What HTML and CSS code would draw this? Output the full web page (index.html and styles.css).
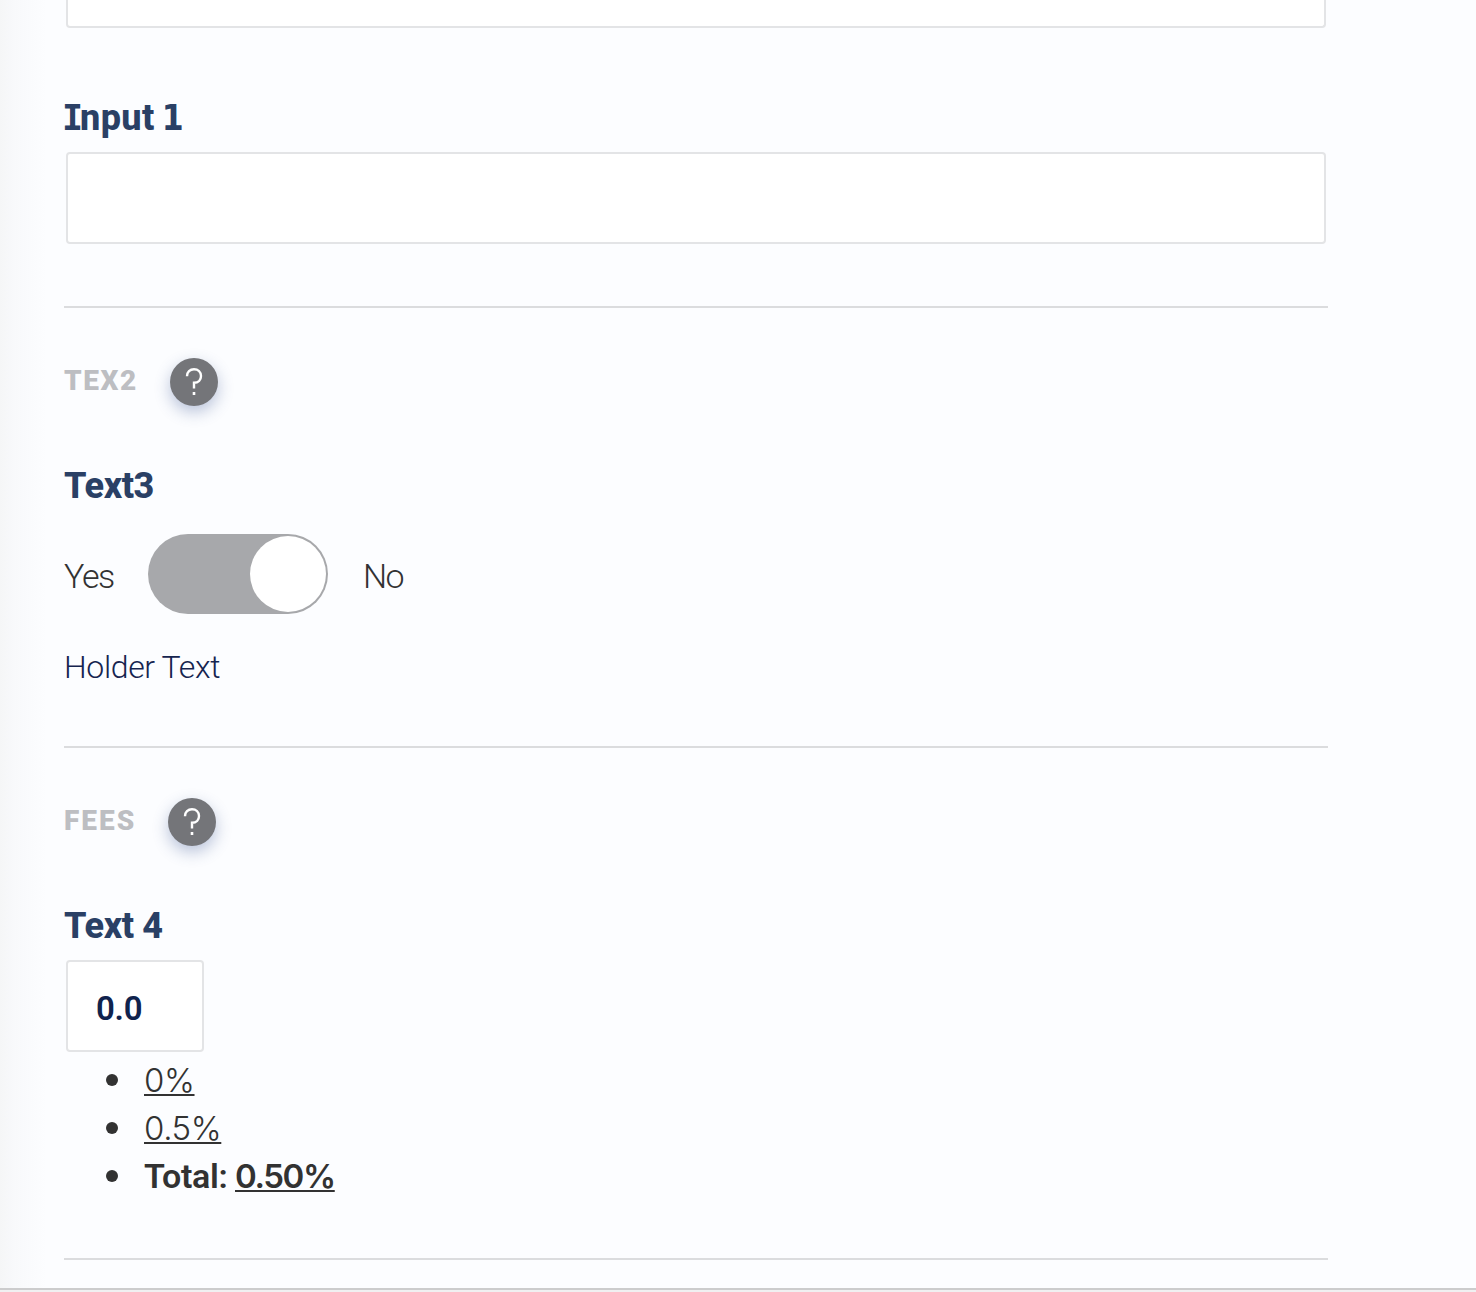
FILE: index.html
```html
<!DOCTYPE html>
<html lang="en">
<head>
<meta charset="utf-8">
<title>Form</title>
<link rel="stylesheet" href="styles.css">
</head>
<body>
<main class="page">
  <section class="group group-first">
    <div class="field field-cut"></div>
    <h3 class="label label-input"><span class="slab-i">I</span><span class="word">nput</span> <span class="slab-one">1</span></h3>
    <div class="field"></div>
  </section>
  <section class="group group-toggle">
    <header class="heading">
      <h2 class="title title-tex">TEX2</h2>
      <span class="help"><svg width="48" height="48" viewBox="0 0 48 48"><path d="M17 18.2C17 14 20 11.200 24 11.200s7 2.800 7 6.800-2.600 6.800-7 6.800v5.700" /><rect x="22.700" y="34" width="2.600" height="3" /></svg></span>
    </header>
    <h3 class="label label-text">Text3</h3>
    <div class="switch-row">
      <span class="yes">Yes</span>
      <span class="switch"><span class="knob"></span></span>
      <span class="no">No</span>
    </div>
    <p class="note">Holder Text</p>
  </section>
  <section class="group group-fees">
    <header class="heading">
      <h2 class="title title-fees">FEES</h2>
      <span class="help"><svg width="48" height="48" viewBox="0 0 48 48"><path d="M17 18.2C17 14 20 11.200 24 11.200s7 2.800 7 6.800-2.600 6.800-7 6.800v5.700" /><rect x="22.700" y="34" width="2.600" height="3" /></svg></span>
    </header>
    <h3 class="label label-fee">Text 4</h3>
    <div class="field field-small">0.0</div>
    <ul class="fees">
      <li><span class="value">0%</span></li>
      <li><span class="value value-mid">0.5%</span></li>
      <li class="total"><span class="total-name">Total:</span><span class="value value-total">0.50%</span></li>
    </ul>
  </section>
</main>
<footer class="edge"></footer>
</body>
</html>
```
FILE: styles.css
```css
* { box-sizing: border-box; }
body {
  margin: 0;
  height: 1292px;
  overflow: hidden;
  display: flex;
  flex-direction: column;
  font-family: Roboto, "Liberation Sans", sans-serif;
  color: #323232;
  background: #fcfdff;
}
h2, h3, p, ul { margin: 0; padding: 0; }
.page {
  height: 1288px;
  flex: none;
  padding: 0 148px 0 64px;
  background: linear-gradient(90deg, #f5f6f7 0, #f8f9fb 14px, #fafbfd 30px, #fcfdff 47px);
}
.edge {
  flex: none;
  height: 4px;
  background: #f0f0f1;
  border-top: 2px solid #cccccd;
}
.group { border-bottom: 2px solid #dbdcde; }
.group-first { height: 308px; }
.group-toggle { height: 440px; padding-top: 50px; }
.group-fees { height: 512px; padding-top: 50px; }
.field {
  height: 92px;
  margin: 0 2px;
  border: 2px solid #e3e4e6;
  border-radius: 4px;
  background: #fff;
}
.field-cut {
  height: 28px;
  margin-bottom: 72px;
  border-top: 0;
  border-radius: 0 0 4px 4px;
}
.field-small {
  width: 138px;
  padding: 4px 0 0 28px;
  font-size: 33px;
  font-weight: 600;
  line-height: 86px;
  letter-spacing: -0.3px;
  color: #10234d;
}
.label {
  height: 36px;
  margin-bottom: 16px;
  font-size: 36px;
  line-height: 36px;
  font-weight: 800;
  color: #2a4065;
  white-space: nowrap;
}
.label-text, .label-fee { letter-spacing: -0.4px; }
.label-input { display: flex; align-items: baseline; }
.slab-i { font-family: "DejaVu Sans Mono", monospace; font-size: 35px; width: 18px; margin-left: -2px; letter-spacing: -6px; }
.word { letter-spacing: 0.4px; }
.slab-one { font-family: "DejaVu Sans Condensed", "DejaVu Sans", sans-serif; font-stretch: condensed; font-size: 35px; margin-left: 7px; }
.heading {
  display: flex;
  height: 48px;
  margin-bottom: 62px;
}
.title {
  padding-bottom: 3px;
  font-size: 28px;
  line-height: 45px;
  font-weight: 900;
  letter-spacing: 1.6px;
  color: #bdbec2;
}
.title-tex { width: 106px; }
.title-fees { width: 104px; letter-spacing: 2px; }
.help {
  width: 48px;
  height: 48px;
  border-radius: 50%;
  background: #747579;
  box-shadow: 0 6px 16px rgba(50, 75, 140, 0.33);
}
.help svg { display: block; }
.help path { fill: none; stroke: #fff; stroke-width: 2.4; }
.help rect { fill: #fff; }
.switch-row {
  display: flex;
  height: 80px;
  margin: 30px 0 33px;
  font-size: 34px;
  font-weight: 350;
  line-height: 85px;
}
.yes { width: 84px; letter-spacing: -1.4px; }
.switch {
  width: 180px;
  height: 80px;
  padding: 2px;
  display: flex;
  justify-content: flex-end;
  border-radius: 40px;
  background: #a7a8ab;
}
.knob { width: 76px; height: 76px; border-radius: 50%; background: #fff; }
.no { margin-left: 35px; letter-spacing: -1.6px; }
.note {
  font-size: 32px;
  font-weight: 350;
  line-height: 40px;
  letter-spacing: -0.35px;
  color: #15244f;
}
.fees { list-style: none; padding: 4px 0 0 42px; }
.fees li {
  display: flex;
  align-items: center;
  height: 48px;
  font-size: 34px;
  font-weight: 300;
  line-height: 48px;
}
.fees li::before {
  content: "";
  width: 12px;
  height: 12px;
  margin-right: 26px;
  border-radius: 50%;
  background: #323232;
}
.value {
  font-family: Inter, Roboto, sans-serif;
  font-size: 33px;
  letter-spacing: -0.4px;
  text-decoration: underline;
  text-decoration-thickness: 2px;
  text-underline-offset: 2px;
  text-decoration-skip-ink: none;
}
.fees .total { font-weight: 600; }
.total-name { width: 83px; letter-spacing: -0.3px; }
.value-total { margin-left: 8px; letter-spacing: -1.4px; }
```
